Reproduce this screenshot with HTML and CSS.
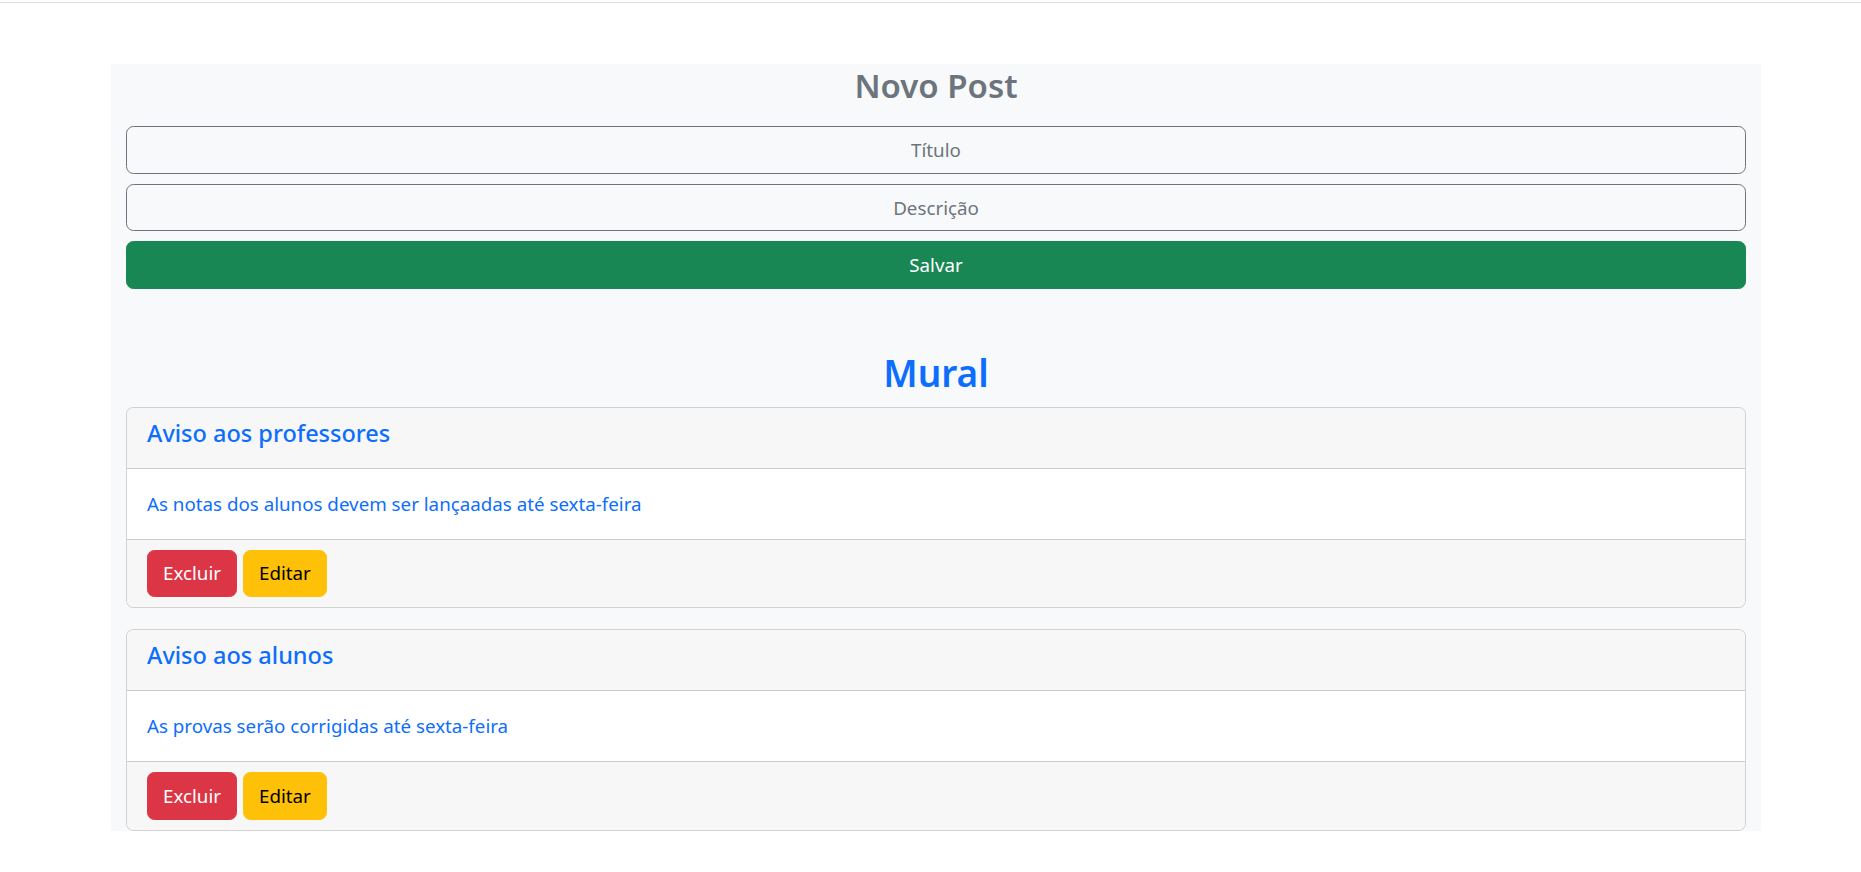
FILE: index.html
```html
<!DOCTYPE html>
<html lang="pt-BR">
<head>
<meta charset="utf-8">
<title>Mural</title>
<link rel="stylesheet" href="styles.css">
</head>
<body>
<div class="topline"></div>
<main class="container">
  <h3 class="form-title">Novo Post</h3>
  <form class="post-form">
    <input class="field" type="text" placeholder="Título">
    <input class="field" type="text" placeholder="Descrição">
    <button class="btn btn-save" type="button">Salvar</button>
  </form>
  <h2 class="mural-title">Mural</h2>
  <section class="posts">
    <article class="card">
      <header class="card-header"><h5 class="card-title">Aviso aos professores</h5></header>
      <div class="card-body"><p class="card-text">As notas dos alunos devem ser lançaadas até sexta-feira</p></div>
      <footer class="card-footer">
        <button class="btn btn-danger" type="button">Excluir</button>
        <button class="btn btn-warning" type="button">Editar</button>
      </footer>
    </article>
    <article class="card">
      <header class="card-header"><h5 class="card-title">Aviso aos alunos</h5></header>
      <div class="card-body"><p class="card-text">As provas serão corrigidas até sexta-feira</p></div>
      <footer class="card-footer">
        <button class="btn btn-danger" type="button">Excluir</button>
        <button class="btn btn-warning" type="button">Editar</button>
      </footer>
    </article>
  </section>
</main>
</body>
</html>
```
FILE: styles.css
```css
* { box-sizing: border-box; }
html, body { margin: 0; padding: 0; }
body {
  font-family: "Noto Sans", "Open Sans", sans-serif;
  font-size: 18.75px;
  line-height: 30px;
  color: #212529;
  background: #fff;
}
.topline {
  height: 3px;
  border-bottom: 1px solid #dcdcdc;
}
.container {
  width: 1650px;
  margin: 61px auto 0 111px;
  padding: 0 15px;
  background: #f8f9fa;
}
.form-title {
  margin: 0 0 20px;
  padding-top: 1px;
  font-size: 33px;
  line-height: 41px;
  font-weight: 600;
  color: #6c757d;
  text-align: center;
}
.post-form {
  display: flex;
  flex-direction: column;
  gap: 10px;
}
.field {
  display: block;
  width: 100%;
  height: 47.5px;
  padding: 7.5px 15px;
  font: inherit;
  font-size: 18.75px;
  line-height: 30px;
  text-align: center;
  color: #212529;
  background: #f8f9fa;
  border: 1px solid #6c757d;
  border-radius: 7.5px;
  outline: none;
}
.field::placeholder { color: #6c757d; opacity: 1; }
.btn {
  display: inline-block;
  height: 47.5px;
  padding: 7.5px 15px;
  font: inherit;
  font-size: 18.75px;
  line-height: 30px;
  border: 1px solid transparent;
  border-radius: 7.5px;
  cursor: pointer;
}
.btn-save {
  width: 100%;
  background: #198754;
  border-color: #198754;
  color: #fff;
}
.mural-title {
  margin: 60px 0 10px;
  font-size: 37px;
  line-height: 48px;
  font-weight: 600;
  color: #0d6efd;
  text-align: center;
}
.posts {
  display: flex;
  flex-direction: column;
  gap: 21px;
}
.card {
  border: 1px solid rgba(0,0,0,.175);
  border-radius: 7.5px;
  overflow: hidden;
  background: #fff;
}
.card-header {
  padding: 10px 20px;
  background: #f7f7f7;
  border-bottom: 1px solid rgba(0,0,0,.175);
}
.card-title {
  margin: 0 0 10px;
  font-size: 23.5px;
  line-height: 30px;
  font-weight: 500;
  color: #0d6efd;
}
.card-body {
  padding: 20px;
}
.card-text {
  margin: 0;
  color: #0d6efd;
}
.card-footer {
  display: flex;
  gap: 6px;
  padding: 10px 20px;
  background: #f7f7f7;
  border-top: 1px solid rgba(0,0,0,.175);
}
.btn-danger {
  background: #dc3545;
  border-color: #dc3545;
  color: #fff;
}
.btn-warning {
  background: #ffc107;
  border-color: #ffc107;
  color: #000;
}
```
